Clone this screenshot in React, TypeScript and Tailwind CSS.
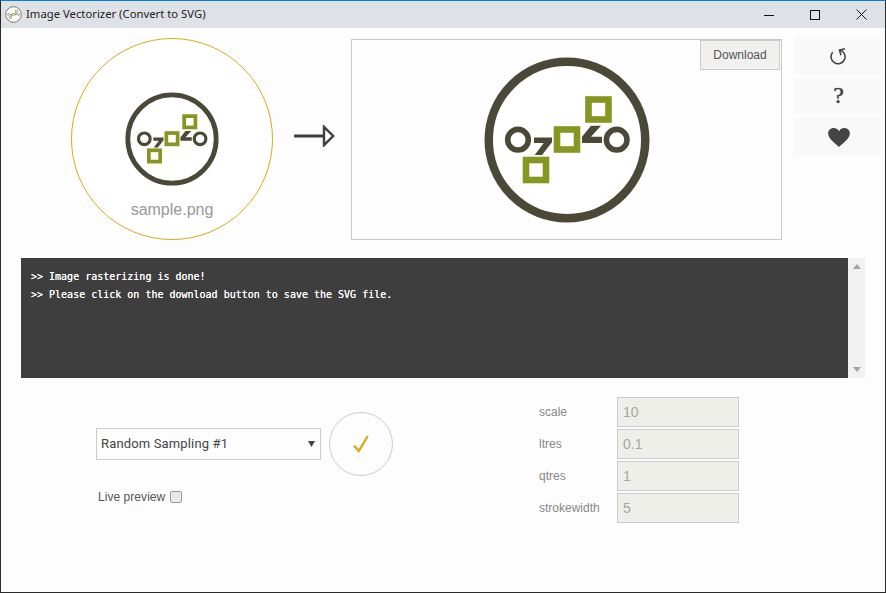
import React from "react";

type LogoProps = {
  size: number;
  className?: string;
};

// redrawn from the sample image: ring, two small rings, three green squares
const Logo: React.FC<LogoProps> = ({ size, className }) => (
  <svg width={size} height={size} viewBox="0 0 170 170" className={className}>
    <circle cx="85" cy="85" r="78.250" fill="#fff" stroke="#4c4838" strokeWidth="8.500" />
    <circle cx="36" cy="84.700" r="10.300" fill="none" stroke="#4c4838" strokeWidth="5.600" />
    <circle cx="134.700" cy="84.700" r="10.300" fill="none" stroke="#4c4838" strokeWidth="5.600" />
    <polygon points="52,82.500 70,82.500 70,87.300 60,100 52.700,100 61.700,88 52,88" fill="#4c4838" />
    <polygon points="100,81.700 109,70.700 119,70.700 109,81.700 120,81.700 120,88 100,88" fill="#4c4838" />
    <rect x="106.500" y="44.500" width="20" height="20" fill="#fff" stroke="#859621" strokeWidth="6.600" />
    <rect x="75" y="74.500" width="20" height="20" fill="#fff" stroke="#859621" strokeWidth="6.600" />
    <rect x="44" y="105" width="20" height="20" fill="#fff" stroke="#859621" strokeWidth="6.600" />
  </svg>
);

const params = [
  { label: "scale", value: "10" },
  { label: "ltres", value: "0.1" },
  { label: "qtres", value: "1" },
  { label: "strokewidth", value: "5" },
];

export default function App() {
  return (
    <div className="flex h-[593px] w-[886px] flex-col overflow-hidden border-x border-b border-t border-x-[#2b2b2b] border-b-[#2b2b2b] border-t-[#0a80d8] bg-[#fdfdfd] font-['Liberation_Sans',sans-serif]">
      {/* title bar */}
      <div className="flex h-[27px] shrink-0 items-center bg-[#dee1e6]">
        <Logo size={17} className="ml-[4px] opacity-80" />
        <span className="ml-[4px] font-['Noto_Sans',sans-serif] text-[11.3px] text-[#222]">
          Image Vectorizer (Convert to SVG)
        </span>
        <div className="ml-auto mr-[18px] flex items-center gap-[36px]">
          <svg width="10" height="10" viewBox="0 0 10 10">
            <path d="M0 5.500H10" stroke="#111" />
          </svg>
          <svg width="10" height="10" viewBox="0 0 10 10">
            <rect x="0.500" y="0.500" width="9" height="9" fill="none" stroke="#111" />
          </svg>
          <svg width="11" height="11" viewBox="0 0 11 11">
            <path d="M0.500 0.500L10.500 10.500M10.500 0.500L0.500 10.500" stroke="#111" />
          </svg>
        </div>
      </div>

      {/* images row */}
      <div className="flex h-[230px] shrink-0 items-start pl-[70px] pt-[10px]">
        <div className="flex h-[202px] w-[202px] shrink-0 flex-col items-center rounded-full border border-[#d4ac1c] bg-white pt-[52px]">
          <Logo size={96} />
          <span className="mt-[13px] text-[16px] leading-[20px] text-[#999]">sample.png</span>
        </div>
        <svg width="41" height="22" viewBox="0 0 41 22" className="ml-[21px] mt-[87px] shrink-0">
          <path d="M0 11H30" stroke="#404040" strokeWidth="3" />
          <path d="M30 1.800L39.200 11L30 20.200Z" fill="none" stroke="#404040" strokeWidth="2.400" />
        </svg>
        <div className="relative ml-[16px] mt-[1px] flex h-[201px] w-[431px] shrink-0 items-center justify-center border border-[#c8c8c8] bg-[#fdfdfd]">
          <Logo size={170} />
          <button className="absolute right-px top-0 h-[30px] w-[80px] border border-[#ccc] bg-[#f0f0ee] text-[12px] text-[#555]">
            Download
          </button>
        </div>
        <div className="ml-[12px] flex w-[89px] shrink-0 flex-col gap-[5px] text-[#444]">
          <div className="flex h-[36px] items-center justify-center bg-[#f9f9f9]">
            <svg width="18" height="18" viewBox="0 0 18 18">
              <path
                d="M2.700 5.200A7 7 0 1 0 10 3"
                fill="none"
                stroke="#444"
                strokeWidth="1.600"
              />
              <path d="M15 1.800L9.500 3L11 8.200" fill="none" stroke="#444" strokeWidth="1.600" />
            </svg>
          </div>
          <div className="flex h-[34px] items-center justify-center bg-[#f9f9f9] pb-[3px] font-['Liberation_Serif',serif] text-[24px] [text-shadow:0_0_1px_#444]">
            ?
          </div>
          <div className="flex h-[38px] items-center justify-center bg-[#f9f9f9]">
            <svg width="22" height="19" viewBox="0 0 24 21">
              <path
                d="M12 21C10 18 0 12.500 0 6C0 2.500 2.700 0 6 0C8.500 0 10.800 1.300 12 3.500C13.200 1.300 15.500 0 18 0C21.300 0 24 2.500 24 6C24 12.500 14 18 12 21Z"
                fill="#444"
              />
            </svg>
          </div>
        </div>
      </div>

      {/* console */}
      <div className="ml-[20px] flex h-[120px] w-[844px] shrink-0">
        <div className="flex-1 bg-[#3e3e3e] pl-[10px] pt-[10px] font-['DejaVu_Sans_Mono',monospace] text-[10px] leading-[18px] text-white [text-shadow:0_0_0.6px_#fff]">
          <div>&gt;&gt; Image rasterizing is done!</div>
          <div>&gt;&gt; Please click on the download button to save the SVG file.</div>
        </div>
        <div className="flex w-[17px] flex-col items-center justify-between bg-[#f1f1f1] py-[6px]">
          <svg width="8" height="5" viewBox="0 0 8 5">
            <path d="M4 0L8 5H0Z" fill="#a3a3a3" />
          </svg>
          <svg width="8" height="5" viewBox="0 0 8 5">
            <path d="M0 0H8L4 5Z" fill="#a3a3a3" />
          </svg>
        </div>
      </div>

      {/* options */}
      <div className="flex flex-1">
        <div className="ml-[95px] w-[297px] shrink-0 pt-[34px]">
          <div className="flex items-center gap-[8px]">
            <div className="relative h-[32px] w-[225px] shrink-0">
              <select
                defaultValue="Random Sampling #1"
                className="h-full w-full appearance-none border border-[#ccc] bg-[#fdfdfd] pl-[4px] font-['Roboto',sans-serif] text-[13px] tracking-[0.15px] text-[#444]"
              >
                <option>Random Sampling #1</option>
              </select>
              <svg width="7" height="6" viewBox="0 0 7 6" className="absolute right-[6px] top-[13px]">
                <path d="M0 0H7L3.500 6Z" fill="#444" />
              </svg>
            </div>
            <div className="flex h-[64px] w-[64px] shrink-0 items-center justify-center rounded-full border border-[#ccc]">
              <svg width="16" height="18" viewBox="0 0 16 18">
                <path d="M1 10.500L5.800 16L14.800 1" fill="none" stroke="#d4ac1c" strokeWidth="2.400" />
              </svg>
            </div>
          </div>
          <label className="ml-[2px] mt-[12px] flex items-center gap-[5px] text-[12px] tracking-[0.05px] text-[#555]">
            Live preview
            <span className="h-[12px] w-[12px] rounded-[2px] border border-[#999] bg-[#e8e8e8]" />
          </label>
        </div>
        <div className="ml-[146px] flex flex-col gap-[2px] pt-[19px]">
          {params.map((p) => (
            <div key={p.label} className="flex items-center">
              <span className="w-[78px] text-[12px] text-[#888]">{p.label}</span>
              <input
                readOnly
                value={p.value}
                className="h-[30px] w-[122px] border border-[#ccc] bg-[#efefe9] pl-[5px] text-[14px] text-[#a5a5a5]"
              />
            </div>
          ))}
        </div>
      </div>
    </div>
  );
}
